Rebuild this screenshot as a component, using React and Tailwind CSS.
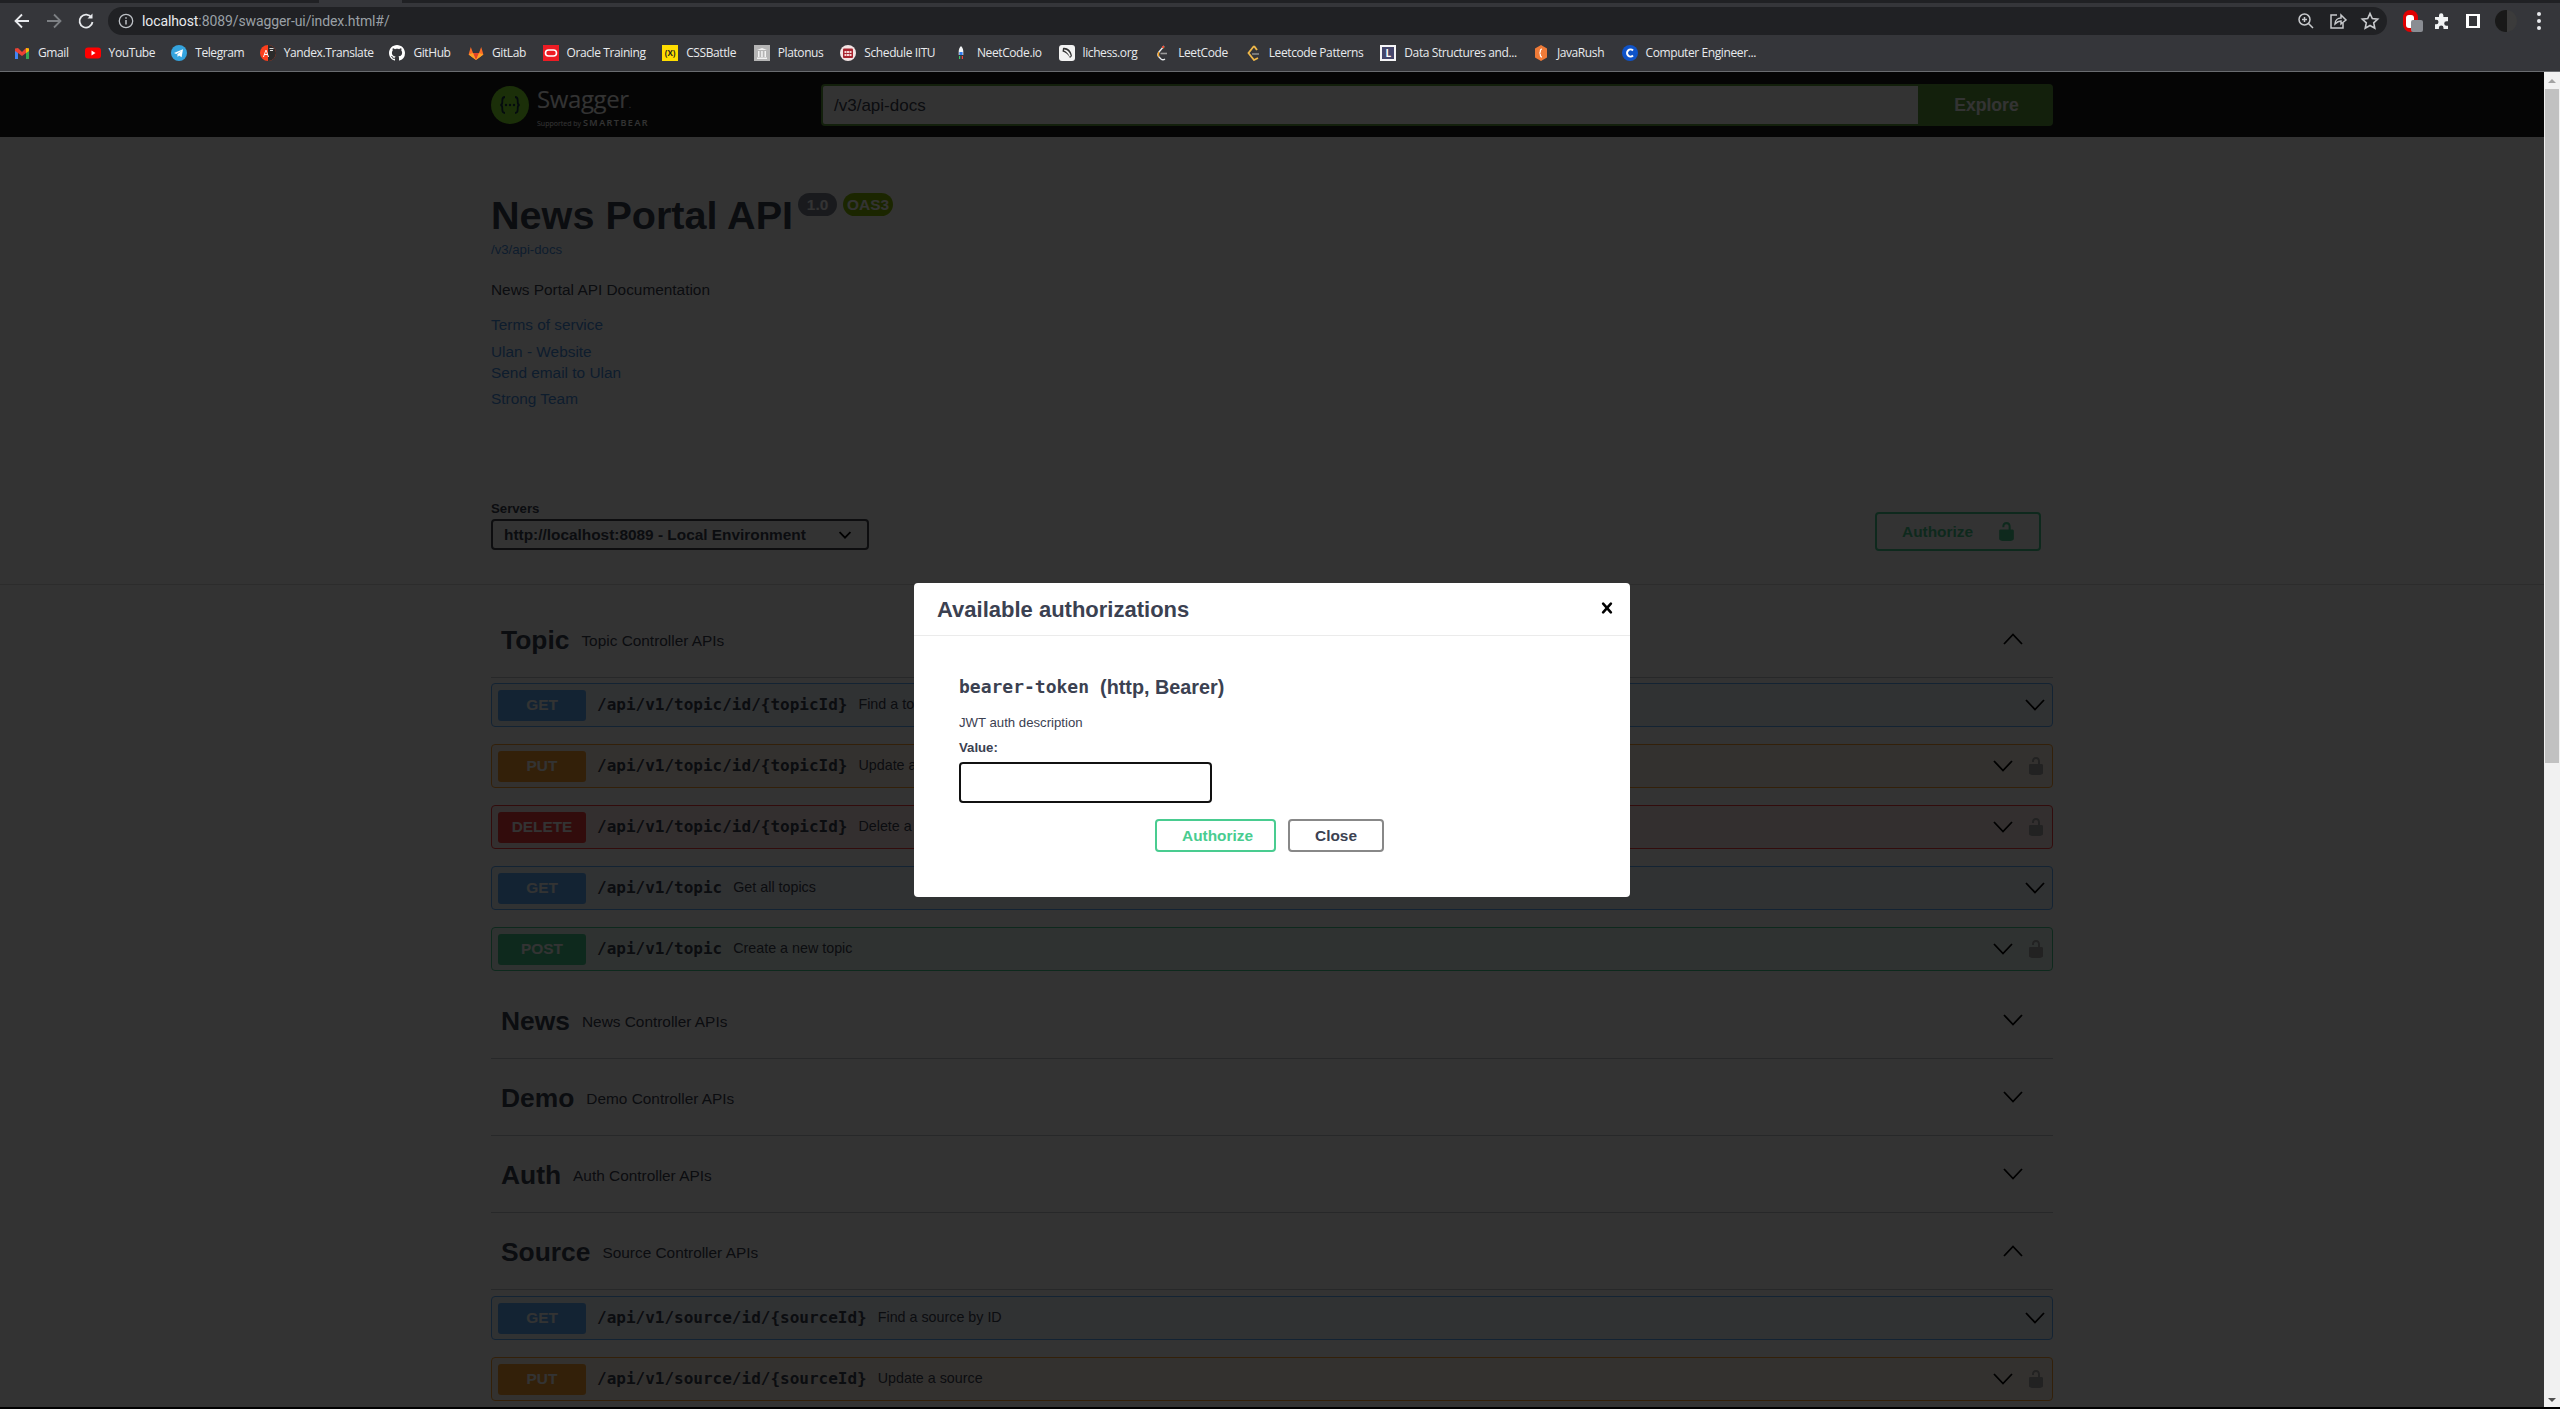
import React from "react";

const bookmarks = [
  { n: "Gmail", w: "w-[30px]", i: "gmail" },
  { n: "YouTube", w: "w-[46px]", i: "youtube" },
  { n: "Telegram", w: "w-[48px]", i: "telegram" },
  { n: "Yandex.Translate", w: "w-[89px]", i: "yandex" },
  { n: "GitHub", w: "w-[38px]", i: "github" },
  { n: "GitLab", w: "w-[34px]", i: "gitlab" },
  { n: "Oracle Training", w: "w-[79px]", i: "oracle" },
  { n: "CSSBattle", w: "w-[51px]", i: "css" },
  { n: "Platonus", w: "w-[46px]", i: "platonus" },
  { n: "Schedule IITU", w: "w-[72px]", i: "schedule" },
  { n: "NeetCode.io", w: "w-[65px]", i: "neet" },
  { n: "lichess.org", w: "w-[55px]", i: "lichess" },
  { n: "LeetCode", w: "w-[50px]", i: "leet" },
  { n: "Leetcode Patterns", w: "w-[95px]", i: "patterns" },
  { n: "Data Structures and...", w: "w-[112px]", i: "data" },
  { n: "JavaRush", w: "w-[48px]", i: "java" },
  { n: "Computer Engineer...", w: "w-[111px]", i: "computer" },
];

function BmIcon({ k }) {
  const s = { width: 16, height: 16, viewBox: "0 0 16 16", className: "shrink-0" };
  switch (k) {
    case "gmail":
      return (
        <svg {...s}>
          <path d="M1 4v10h3V7z" fill="#4285f4" />
          <path d="M15 4v10h-3V7z" fill="#34a853" />
          <path d="M1 3.5 4 3l4 4 4-4 3 .5V6l-3 2-4 3-4-3-3-2z" fill="#ea4335" />
          <path d="M12 3l3 .5V6l-3 2z" fill="#fbbc04" />
        </svg>
      );
    case "youtube":
      return (
        <svg {...s}>
          <rect x="0" y="2.5" width="16" height="11" rx="3" fill="#ff0000" />
          <path d="M6.5 5.5v5l4-2.5z" fill="#fff" />
        </svg>
      );
    case "telegram":
      return (
        <svg {...s}>
          <circle cx="8" cy="8" r="8" fill="#35a4de" />
          <path d="M3 8l9-3.7-1.4 8L8 10.4 6.7 12l-.4-2.8L10.5 6 5.2 8.9z" fill="#fff" />
        </svg>
      );
    case "yandex":
      return (
        <svg {...s}>
          <circle cx="8" cy="8" r="8" fill="#fc3f1d" />
          <path d="M8 0a8 8 0 0 1 0 16z" fill="#2b2b2b" />
          <path d="M3 12l2.5-7h1L9 12H8l-.6-2H4.6L4 12zm2-3h2L6 6z" fill="#fff" />
          <rect x="9.5" y="3" width="4" height="1" fill="#ddd" />
          <rect x="10" y="5" width="3" height="1" fill="#ddd" />
        </svg>
      );
    case "github":
      return (
        <svg {...s}>
          <path
            fill="#fff"
            d="M8 0C3.58 0 0 3.58 0 8c0 3.54 2.29 6.53 5.47 7.59.4.07.55-.17.55-.38 0-.19-.01-.82-.01-1.49-2.01.37-2.53-.49-2.69-.94-.09-.23-.48-.94-.82-1.13-.28-.15-.68-.52-.01-.53.63-.01 1.08.58 1.23.82.72 1.21 1.87.87 2.33.66.07-.52.28-.87.51-1.07-1.78-.2-3.64-.89-3.64-3.95 0-.87.31-1.59.82-2.15-.08-.2-.36-1.02.08-2.12 0 0 .67-.21 2.2.82.64-.18 1.32-.27 2-.27s1.36.09 2 .27c1.53-1.04 2.2-.82 2.2-.82.44 1.1.16 1.92.08 2.12.51.56.82 1.27.82 2.15 0 3.07-1.87 3.75-3.65 3.95.29.25.54.73.54 1.48 0 1.07-.01 1.93-.01 2.2 0 .21.15.46.55.38A8.01 8.01 0 0 0 16 8c0-4.42-3.58-8-8-8z"
          />
        </svg>
      );
    case "gitlab":
      return (
        <svg {...s}>
          <path d="M8 15 .6 9.5 2.8 2l2.2 6h6l2.2-6 2.2 7.5z" fill="#fc6d26" />
          <path d="M8 15 5 8h6z" fill="#e24329" />
          <path d="M.6 9.5 5 8l3 7zM15.4 9.5 11 8l-3 7z" fill="#fca326" />
        </svg>
      );
    case "oracle":
      return (
        <svg {...s}>
          <rect width="16" height="16" fill="#ed1c24" />
          <rect x="2.5" y="5" width="11" height="6" rx="3" fill="none" stroke="#fff" strokeWidth="1.6" />
        </svg>
      );
    case "css":
      return (
        <div className="w-4 h-4 shrink-0 bg-[#ffdd00] flex items-center justify-center text-[8px] font-bold text-[#222] leading-none">
          (X)
        </div>
      );
    case "platonus":
      return (
        <svg {...s}>
          <rect width="16" height="16" fill="#b5b5b5" />
          <path d="M3 5l5-2 5 2zM4 6h1.5v6H4zM7.2 6h1.5v6H7.2zM10.5 6H12v6h-1.5zM3 12.5h10V14H3z" fill="#f2f2f2" />
        </svg>
      );
    case "schedule":
      return (
        <svg {...s}>
          <circle cx="8" cy="8" r="8" fill="#f3e4e4" />
          <rect x="3" y="3.5" width="10" height="9.5" rx="1" fill="#a8242e" />
          <path d="M4.5 6h2v2h-2zM7 6h2v2H7zM9.5 6h2v2h-2zM4.5 9h2v2h-2zM7 9h2v2H7zM9.5 9h2v2h-2z" fill="#f6d5d5" />
        </svg>
      );
    case "neet":
      return (
        <svg {...s}>
          <path d="M8 1c2 2 2.3 4 2.3 6v3H5.7V7C5.7 5 6 3 8 1z" fill="#f4f6f8" />
          <rect x="6.4" y="7" width="3.2" height="3" fill="#2f7bf0" />
          <path d="M6 11h1.2v3H6z" fill="#3cc76a" />
          <path d="M8.8 11H10v3H8.8z" fill="#ef4444" />
        </svg>
      );
    case "lichess":
      return (
        <svg {...s}>
          <rect width="16" height="16" rx="3" fill="#f2f2f2" />
          <path d="M4 3c4-.8 8 2 9 8l-2 2C9 9 6 7 3.5 6.5z" fill="#333" />
          <path d="M5 4.6c3 .2 6 2.6 6.7 6.2L10.8 12C9.5 9 7.5 6.8 5 5.6z" fill="#f2f2f2" />
        </svg>
      );
    case "leet":
      return (
        <svg {...s} fill="none">
          <path d="M10 1 5 7c-1.5 2-1.5 3.5 0 5l2 2c1.2 1 2.6 1 4 0" stroke="#e8eaed" strokeWidth="1.4" />
          <path d="M6.5 8.5H13" stroke="#9a9a9a" strokeWidth="1.6" />
          <path d="M8.5 1.5 10 3" stroke="#f89f1b" strokeWidth="1.6" />
          <circle cx="9" cy="2" r="1" fill="#e33" />
          <path d="M5 7c-1 1.500-1 3 0 4.500" stroke="#f89f1b" strokeWidth="1.4" />
        </svg>
      );
    case "patterns":
      return (
        <svg {...s} fill="none">
          <path d="M9 1 3.500 8 9 15l4-2" stroke="#f0b849" strokeWidth="1.8" />
          <path d="M7 9h7" stroke="#8a8a8a" strokeWidth="1.6" />
          <path d="M9 1l3 4" stroke="#f0b849" strokeWidth="1.8" />
        </svg>
      );
    case "data":
      return (
        <div className="w-4 h-4 shrink-0 bg-[#f4f4f6] border-2 border-[#f4f4f6] flex items-center justify-center">
          <div className="w-full h-full bg-[#45466b] flex items-center justify-center text-white text-[10px] font-bold leading-none">
            L
          </div>
        </div>
      );
    case "java":
      return (
        <svg {...s}>
          <path d="M8 0l6 3.500v9L8 16l-6-3.500v-9z" fill="#ef7b38" />
          <path d="M9 4c-1.500 0-1.700 1-1.700 2.500 0 1-.3 1.500-1 1.500.7 0 1 .5 1 1.500C7.300 11 7.500 12 9 12" stroke="#fff" strokeWidth="1.2" fill="none" />
        </svg>
      );
    case "computer":
      return (
        <svg {...s}>
          <circle cx="8" cy="8" r="8" fill="#0f53c8" />
          <path d="M11 5.500A3.500 3.500 0 1 0 11 10.500" stroke="#fff" strokeWidth="2" fill="none" />
        </svg>
      );
    default:
      return null;
  }
}

function Chevron({ up, small }) {
  return (
    <svg
      className={small ? "w-[12px] h-[8px] shrink-0" : "w-[20px] h-[12px] shrink-0"}
      viewBox="0 0 20 12"
      fill="none"
      stroke="#000"
      strokeWidth={small ? 3 : 1.8}
    >
      <path d={up ? "M1 11 10 1.500 19 11" : "M1 1 10 10.500 19 1"} />
    </svg>
  );
}

function Lock({ fill, cls }) {
  return (
    <svg className={cls} viewBox="3 0 14 20" fill={fill}>
      <path d="M15.800 8H14V5.600C14 2.703 12.665 1 10 1 7.334 1 6 2.703 6 5.600V6h2v-.801C8 3.754 8.797 3 10 3c1.203 0 2 .754 2 2.199V8H4c-.553 0-1 .646-1 1.199V17c0 .549.428 1.139.951 1.307l1.197.387C5.672 18.861 6.550 19 7.100 19h5.800c.549 0 1.428-.139 1.951-.307l1.196-.387c.524-.167.953-.757.953-1.306V9.199C17 8.646 16.352 8 15.800 8z" />
    </svg>
  );
}

const styles = {
  GET: { row: "border-[#61affe] bg-[#61affe]/10", badge: "bg-[#61affe]" },
  PUT: { row: "border-[#fca130] bg-[#fca130]/10", badge: "bg-[#fca130]" },
  POST: { row: "border-[#49cc90] bg-[#49cc90]/10", badge: "bg-[#49cc90]" },
  DELETE: { row: "border-[#f93e3e] bg-[#f93e3e]/10", badge: "bg-[#f93e3e]" },
};

const MONO = "font-['DejaVu_Sans_Mono',monospace]";

function Op({ m, path, sum, lock }) {
  const st = styles[m];
  return (
    <div className={`h-[44px] mb-[17px] border rounded-[4px] flex items-center pl-[6px] pr-[7px] ${st.row}`}>
      <div className={`w-[88px] h-[31px] rounded-[3px] flex items-center justify-center text-white font-bold text-[15.4px] ${st.badge}`}>
        {m}
      </div>
      <span className={`ml-[11px] text-[#3b4151] font-bold text-[16px] whitespace-nowrap ${MONO}`}>{path}</span>
      <span className="ml-[11px] text-[#3b4151] text-[14.3px] whitespace-nowrap flex-1">{sum}</span>
      {lock ? (
        <div className="flex items-center gap-[15px] pr-[1px]">
          <Chevron />
          <Lock fill="#a8a8a8" cls="w-[16px] h-[20px] shrink-0" />
        </div>
      ) : (
        <Chevron />
      )}
    </div>
  );
}

function Section({ title, desc, up, children }) {
  return (
    <div>
      <div className="h-[77px] pt-[4px] border-b border-[#3b4151]/30 flex items-center pl-[10px] pr-[30px]">
        <span className="font-bold text-[26.4px] text-[#3b4151]">{title}</span>
        <span className="ml-[12px] text-[15.4px] text-[#3b4151] flex-1">{desc}</span>
        <div className="-mt-[4px]">
          <Chevron up={up} />
        </div>
      </div>
      {children}
    </div>
  );
}

function ToolIcon({ children, cls }) {
  return (
    <svg className={cls} width="20" height="20" viewBox="0 0 20 20" fill="none" stroke="#c7c9cc" strokeWidth="1.500">
      {children}
    </svg>
  );
}

export default function App() {
  return (
    <div className="w-[2560px] h-[1409px] overflow-hidden flex flex-col bg-black font-['Liberation_Sans',Arial,sans-serif]">
      {/* Tab strip */}
      <div className="h-[3px] flex bg-[#202124] shrink-0">
        <div className="w-[319px]" />
        <div className="w-[83px] bg-[#35363a]" />
      </div>

      {/* Toolbar */}
      <div className="h-[32px] pt-[4px] bg-[#35363a] flex items-center shrink-0 pl-[12px] font-['Roboto',sans-serif]">
        <svg width="20" height="20" viewBox="0 0 20 20" fill="none" stroke="#e8eaed" strokeWidth="1.800">
          <path d="M17 10H4M10 3.500 3.500 10l6.500 6.500" />
        </svg>
        <svg className="ml-[12px]" width="20" height="20" viewBox="0 0 20 20" fill="none" stroke="#7d8084" strokeWidth="1.800">
          <path d="M3 10h13M10 3.500l6.500 6.500-6.500 6.500" />
        </svg>
        <svg className="ml-[12px]" width="20" height="20" viewBox="0 0 20 20" fill="none" stroke="#e8eaed" strokeWidth="1.800">
          <path d="M15.500 6.500A6.500 6.500 0 1 0 16.500 11" />
          <path d="M16.500 2.500v5h-5z" fill="#e8eaed" stroke="none" />
        </svg>
        <div className="ml-[12px] w-[2279px] h-[28px] rounded-full bg-[#202124] flex items-center pl-[10px] pr-[7px]">
          <svg width="16" height="16" viewBox="0 0 16 16" fill="none" stroke="#bdc1c6" strokeWidth="1.300">
            <circle cx="8" cy="8" r="6.700" />
            <path d="M8 7v4.500" strokeWidth="1.500" />
            <path d="M8 4.200v1.500" strokeWidth="1.500" />
          </svg>
          <span className="ml-[8px] text-[14px] tracking-[-0.1px] text-[#e8eaed] whitespace-nowrap flex-1">
            localhost<span className="text-[#9aa0a6]">:8089/swagger-ui/index.html#/</span>
          </span>
          <ToolIcon>
            <circle cx="8.500" cy="8.500" r="5.500" />
            <path d="M12.500 12.500 17 17M8.500 6v5M6 8.500h5" />
          </ToolIcon>
          <ToolIcon cls="ml-[12px]">
            <path d="M9 4H3v13h12v-5" />
            <path d="M7 13c0-4 3-6 6-6V4l5 5-5 4v-3c-3 0-4 1-6 3z" />
          </ToolIcon>
          <ToolIcon cls="ml-[12px]">
            <path d="M10 2.500l2.300 5 5.400.6-4 3.700 1.100 5.400L10 14.500l-4.800 2.700 1.100-5.400-4-3.700 5.400-.6z" strokeWidth="1.600" />
          </ToolIcon>
        </div>
        {/* Extensions */}
        <div className="ml-[13px] relative w-[20px] h-[22px] flex items-center justify-center">
          <div className="w-[15px] h-[22px] rounded-[8px] bg-[#e00000] flex items-center justify-center">
            <div className="w-[8px] h-[13px] rounded-[3px] bg-white" />
          </div>
          <div className="absolute left-[11px] top-[10px] w-[12px] h-[12px] rounded-[2px] bg-[#8a8d93]" />
        </div>
        <svg className="ml-[12px]" width="20" height="20" viewBox="0 0 20 20" fill="#f1f3f4">
          <path d="M3 6h4V4.500a2.200 2.200 0 0 1 4.400 0V6H16v4.200h-1.500a2.300 2.300 0 0 0 0 4.600H16V18H11.500v-1.300a2.300 2.300 0 0 0-4.600 0V18H3v-4.800h1.300a2.200 2.200 0 0 0 0-4.400H3z" />
        </svg>
        <div className="ml-[14px] w-[14px] h-[14px] border-x-[3px] border-y-[2px] border-white" />
        <div className="ml-[15px] w-[22px] h-[22px] rounded-full bg-[#3b3b3b] overflow-hidden flex">
          <div className="w-[12px] h-full bg-[#191919]" />
        </div>
        <div className="ml-[20px] flex flex-col gap-[3px]">
          <div className="w-[4px] h-[4px] rounded-full bg-[#e8eaed]" />
          <div className="w-[4px] h-[4px] rounded-full bg-[#e8eaed]" />
          <div className="w-[4px] h-[4px] rounded-full bg-[#e8eaed]" />
        </div>
      </div>

      {/* Bookmarks */}
      <div className="h-[37px] bg-[#35363a] border-b border-[#6a6c70] flex items-center pl-[14px] gap-[16.6px] shrink-0 font-['Open_Sans',sans-serif]">
        {bookmarks.map((b) => (
          <div key={b.n} className="flex items-center gap-2">
            <BmIcon k={b.i} />
            <span className={`${b.w} text-[12px] tracking-[-0.4px] text-[#e8eaed] whitespace-nowrap`}>{b.n}</span>
          </div>
        ))}
      </div>

      {/* Page */}
      <div className="flex-1 min-h-0 flex">
        <div className="relative flex-1 min-w-0 overflow-hidden bg-white">
          {/* Swagger top bar */}
          <div className="h-[65px] pt-[1px] bg-[#1b1b1b]">
            <div className="w-[1562px] mx-auto h-full flex items-center">
              <div className="w-[330px] flex items-center">
                <svg width="38" height="38" viewBox="0 0 38 38" className="shrink-0">
                  <circle cx="19" cy="19" r="19" fill="#85ea2d" />
                  <g fill="none" stroke="#173646" strokeWidth="1.800">
                    <path d="M14 11c-2.500 0-2.700 1.500-2.700 3.500v1.500c0 2-1 3-2 3 1 0 2 1 2 3v1.500c0 2 .2 3.500 2.700 3.500" />
                    <path d="M24 11c2.500 0 2.700 1.500 2.700 3.500v1.500c0 2 1 3 2 3-1 0-2 1-2 3v1.500c0 2-.2 3.500-2.700 3.500" />
                  </g>
                  <circle cx="15" cy="19" r="1.200" fill="#173646" />
                  <circle cx="19" cy="19" r="1.200" fill="#173646" />
                  <circle cx="23" cy="19" r="1.200" fill="#173646" />
                </svg>
                <div className="ml-[8px] mt-[5px] flex flex-col">
                  <span className="text-white text-[24px] leading-[26px] tracking-[-0.4px] font-['Open_Sans',sans-serif]">
                    Swagger<span className="text-[9px]">.</span>
                  </span>
                  <span className="text-white text-[7px] leading-[10px] font-['Open_Sans',sans-serif] whitespace-nowrap">
                    Supported by <span className="text-[9px] font-semibold tracking-[1.500px]">SMARTBEAR</span>
                  </span>
                </div>
              </div>
              <div className="flex-1 flex h-[42px]">
                <div className="flex-1 bg-white border-2 border-[#62a03f] flex items-center pl-[11px] pt-[2px] text-[#3b4151] text-[17px] rounded-l-[4px]">
                  /v3/api-docs
                </div>
                <div className="w-[133px] bg-[#62a03f] rounded-r-[4px] flex items-center justify-center text-white font-bold text-[17.6px]">
                  Explore
                </div>
              </div>
            </div>
          </div>

          {/* Info */}
          <div className="w-[1562px] mx-auto h-[354px] pt-[52px] text-[#3b4151]">
            <div className="flex items-start">
              <h1 className="font-bold text-[39.600px] leading-[52px]">News Portal API</h1>
              <span className="ml-[5px] mt-[4px] h-[23px] w-[39px] rounded-full bg-[#7d8492] text-white font-bold text-[15.400px] flex items-center justify-center">
                1.0
              </span>
              <span className="ml-[6px] mt-[4px] h-[23px] w-[50px] rounded-full bg-[#89bf04] text-white font-bold text-[15.400px] flex items-center justify-center">
                OAS3
              </span>
            </div>
            <div className="mt-[1px] text-[13.200px] leading-[16px] text-[#4990e2]">/v3/api-docs</div>
            <div className="mt-[23px] text-[15.400px] leading-[18px]">News Portal API Documentation</div>
            <div className="mt-[17px] text-[15.400px] leading-[18px] text-[#4990e2]">Terms of service</div>
            <div className="mt-[9px] text-[15.400px] leading-[18px] text-[#4990e2]">Ulan - Website</div>
            <div className="mt-[3px] text-[15.400px] leading-[18px] text-[#4990e2]">Send email to Ulan</div>
            <div className="mt-[8px] text-[15.400px] leading-[18px] text-[#4990e2]">Strong Team</div>
          </div>

          {/* Schemes */}
          <div className="h-[94px] border-b border-black/15">
            <div className="w-[1562px] mx-auto relative h-full pt-[10px] flex justify-between">
              <div>
                <div className="font-bold text-[13.200px] leading-[16px] text-[#3b4151]">Servers</div>
                <div className="mt-[2px] w-[378px] h-[31px] border-2 border-[#41444e] rounded-[4px] flex items-center justify-between pl-[11px] pr-[16px] font-bold text-[15.400px] text-[#3b4151]">
                  http://localhost:8089 - Local Environment
                  <Chevron small />
                </div>
              </div>
              <div className="mr-[12px] mt-[11px] w-[166px] h-[39px] border-2 border-[#49cc90] rounded-[4px] flex items-center justify-center gap-[25px] pl-[1px] font-bold text-[15.400px] text-[#49cc90]">
                Authorize
                <Lock fill="#49cc90" cls="w-[17px] h-[21px]" />
              </div>
            </div>
          </div>

          {/* Operations */}
          <div className="w-[1562px] mx-auto mt-[16px]">
            <Section title="Topic" desc="Topic Controller APIs" up>
              <div className="pt-[5px]">
                <Op m="GET" path="/api/v1/topic/id/{topicId}" sum="Find a topic by ID" />
                <Op m="PUT" path="/api/v1/topic/id/{topicId}" sum="Update a topic" lock />
                <Op m="DELETE" path="/api/v1/topic/id/{topicId}" sum="Delete a topic" lock />
                <Op m="GET" path="/api/v1/topic" sum="Get all topics" />
                <Op m="POST" path="/api/v1/topic" sum="Create a new topic" lock />
              </div>
            </Section>
            <div className="-mt-[6px]">
              <Section title="News" desc="News Controller APIs" />
              <Section title="Demo" desc="Demo Controller APIs" />
              <Section title="Auth" desc="Auth Controller APIs" />
              <Section title="Source" desc="Source Controller APIs" up>
                <div className="pt-[6px]">
                  <Op m="GET" path="/api/v1/source/id/{sourceId}" sum="Find a source by ID" />
                  <Op m="PUT" path="/api/v1/source/id/{sourceId}" sum="Update a source" lock />
                </div>
              </Section>
            </div>
          </div>

          {/* Modal backdrop */}
          <div className="absolute inset-0 bg-black/80 flex justify-center items-start pt-[511px]">
            <div className="w-[716px] h-[314px] bg-white rounded-[4px] text-[#3b4151] flex flex-col">
              <div className="h-[53px] border-b border-[#ebebeb] flex items-center justify-between pl-[23px] pr-[12px] shrink-0">
                <span className="font-bold text-[22px]">Available authorizations</span>
                <svg width="22" height="22" viewBox="0 0 20 20" fill="#000" className="-mt-[2px]">
                  <path d="M14.348 14.849a1.200 1.200 0 0 1-1.697 0L10 11.819l-2.651 3.029a1.200 1.200 0 1 1-1.697-1.697l2.758-3.150-2.759-3.152a1.200 1.200 0 1 1 1.697-1.697L10 8.183l2.651-3.031a1.200 1.200 0 1 1 1.697 1.697l-2.758 3.152 2.758 3.150a1.200 1.200 0 0 1 0 1.698z" />
                </svg>
              </div>
              <div className="pl-[45px] pt-[39px]">
                <div className="flex items-center font-bold text-[19.800px] leading-[24px]">
                  <span className={`text-[18px] ${MONO}`}>bearer-token</span>
                  <span className="ml-[11px]">(http, Bearer)</span>
                </div>
                <div className="mt-[16px] text-[13.200px] leading-[16px]">JWT auth description</div>
                <div className="mt-[9px] font-bold text-[13.200px] leading-[16px]">Value:</div>
                <input
                  readOnly
                  className="block mt-[6px] w-[253px] h-[41px] bg-white border-2 border-[#111] rounded-[4px] outline-none"
                />
              </div>
              <div className="mt-[16px] flex justify-center gap-[12px] pr-[5px]">
                <div className="w-[121px] h-[33px] border-2 border-[#49cc90] rounded-[4px] flex items-center justify-center pl-[4px] font-bold text-[15.400px] text-[#49cc90]">
                  Authorize
                </div>
                <div className="w-[96px] h-[33px] border-2 border-[#888888] rounded-[4px] flex items-center justify-center font-bold text-[15.400px] text-[#3b4151]">
                  Close
                </div>
              </div>
            </div>
          </div>
        </div>

        {/* Scrollbar */}
        <div className="w-[16px] bg-[#f1f1f1] flex flex-col items-center shrink-0">
          <div className="h-[17px] w-full flex items-center justify-center">
            <div className="w-0 h-0 border-x-[4px] border-x-transparent border-b-[4px] border-b-[#a3a3a3]" />
          </div>
          <div className="w-[14px] h-[674px] bg-[#c1c1c1]" />
          <div className="flex-1" />
          <div className="h-[15px] w-full flex items-center justify-center">
            <div className="w-0 h-0 border-x-[4px] border-x-transparent border-t-[4px] border-t-[#505050]" />
          </div>
        </div>
      </div>
      <div className="h-[2px] bg-black shrink-0" />
    </div>
  );
}
